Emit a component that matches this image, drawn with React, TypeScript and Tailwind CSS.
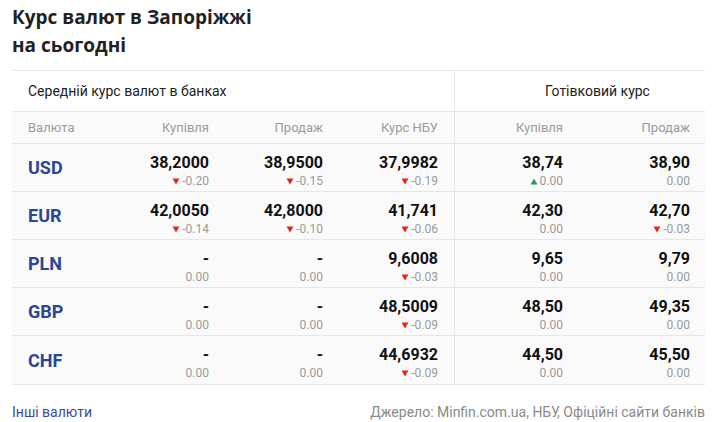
import React from "react";

type Cell = { v: string; d: string; dir?: "up" | "down" };

const rows: { code: string; cells: Cell[] }[] = [
  {
    code: "USD",
    cells: [
      { v: "38,2000", d: "-0.20", dir: "down" },
      { v: "38,9500", d: "-0.15", dir: "down" },
      { v: "37,9982", d: "-0.19", dir: "down" },
      { v: "38,74", d: "0.00", dir: "up" },
      { v: "38,90", d: "0.00" },
    ],
  },
  {
    code: "EUR",
    cells: [
      { v: "42,0050", d: "-0.14", dir: "down" },
      { v: "42,8000", d: "-0.10", dir: "down" },
      { v: "41,741", d: "-0.06", dir: "down" },
      { v: "42,30", d: "0.00" },
      { v: "42,70", d: "-0.03", dir: "down" },
    ],
  },
  {
    code: "PLN",
    cells: [
      { v: "-", d: "0.00" },
      { v: "-", d: "0.00" },
      { v: "9,6008", d: "-0.03", dir: "down" },
      { v: "9,65", d: "0.00" },
      { v: "9,79", d: "0.00" },
    ],
  },
  {
    code: "GBP",
    cells: [
      { v: "-", d: "0.00" },
      { v: "-", d: "0.00" },
      { v: "48,5009", d: "-0.09", dir: "down" },
      { v: "48,50", d: "0.00" },
      { v: "49,35", d: "0.00" },
    ],
  },
  {
    code: "CHF",
    cells: [
      { v: "-", d: "0.00" },
      { v: "-", d: "0.00" },
      { v: "44,6932", d: "-0.09", dir: "down" },
      { v: "44,50", d: "0.00" },
      { v: "45,50", d: "0.00" },
    ],
  },
];

const cols = "grid grid-cols-[98px_115px_114px_116px_124px_127px]";

function Arrow({ dir }: { dir: "up" | "down" }) {
  return (
    <svg width="8" height="7" viewBox="0 0 8 7" className="mr-[2px]">
      {dir === "down" ? (
        <path d="M0.5 0.5h7L4 6.5z" fill="#e3261d" />
      ) : (
        <path d="M0.5 6.5h7L4 0.5z" fill="#2f9a6a" />
      )}
    </svg>
  );
}

function ValueCell({ c, divider }: { c: Cell; divider?: boolean }) {
  return (
    <div
      className={
        "flex flex-col items-end pr-4 pt-[9px] " +
        (divider ? "border-r border-[#e6e6e6]" : "")
      }
    >
      <div className="text-[16px] font-bold leading-[20px] text-[#111]">{c.v}</div>
      <div className="flex items-center text-[12px] leading-[16px] text-[#9a9a9a]">
        {c.dir && <Arrow dir={c.dir} />}
        {c.d}
      </div>
    </div>
  );
}

export default function App() {
  return (
    <div className="w-[717px] h-[422px] bg-white px-3 font-['Roboto',sans-serif] text-[#222]">
      <h1 className="pt-[3px] font-['Open_Sans',sans-serif] text-[19px] font-bold leading-[28px] text-[#222]">
        Курс валют в Запоріжжі
        <br />
        на сьогодні
      </h1>

      <div className="mt-[11px] border-y border-[#e6e6e6]">
        {/* group headers */}
        <div className={cols + " h-[41px] border-b border-[#e6e6e6] bg-white text-[14px]"}>
          <div className="col-span-4 flex items-center pl-4 border-r border-[#e6e6e6]">
            Середній курс валют в банках
          </div>
          <div className="col-span-2 flex items-center justify-center pl-[34px]">
            Готівковий курс
          </div>
        </div>

        {/* column headers */}
        <div className={cols + " h-[32px] border-b border-[#e6e6e6] bg-[#fafafa] text-[13px] text-[#9a9a9a]"}>
          <div className="flex items-center pl-4">Валюта</div>
          <div className="flex items-center justify-end pr-4">Купівля</div>
          <div className="flex items-center justify-end pr-4">Продаж</div>
          <div className="flex items-center justify-end pr-4 border-r border-[#e6e6e6]">Курс НБУ</div>
          <div className="flex items-center justify-end pr-4">Купівля</div>
          <div className="flex items-center justify-end pr-4">Продаж</div>
        </div>

        {rows.map((r, i) => (
          <div
            key={r.code}
            className={
              cols +
              " h-[48px] bg-[#fafafa] " +
              (i < rows.length - 1 ? "border-b border-[#e6e6e6]" : "")
            }
          >
            <div className="flex items-center pl-4 text-[18px] font-bold text-[#2a4694]">
              {r.code}
            </div>
            <ValueCell c={r.cells[0]} />
            <ValueCell c={r.cells[1]} />
            <ValueCell c={r.cells[2]} divider />
            <ValueCell c={r.cells[3]} />
            <ValueCell c={r.cells[4]} />
          </div>
        ))}
      </div>

      <div className="mt-[17px] flex items-center justify-between text-[14px]">
        <a href="#" className="text-[#3b4a9e]">
          Інші валюти
        </a>
        <span className="text-[#8a8a8a]">Джерело: Minfin.com.ua, НБУ, Офіційні сайти банків</span>
      </div>
    </div>
  );
}
